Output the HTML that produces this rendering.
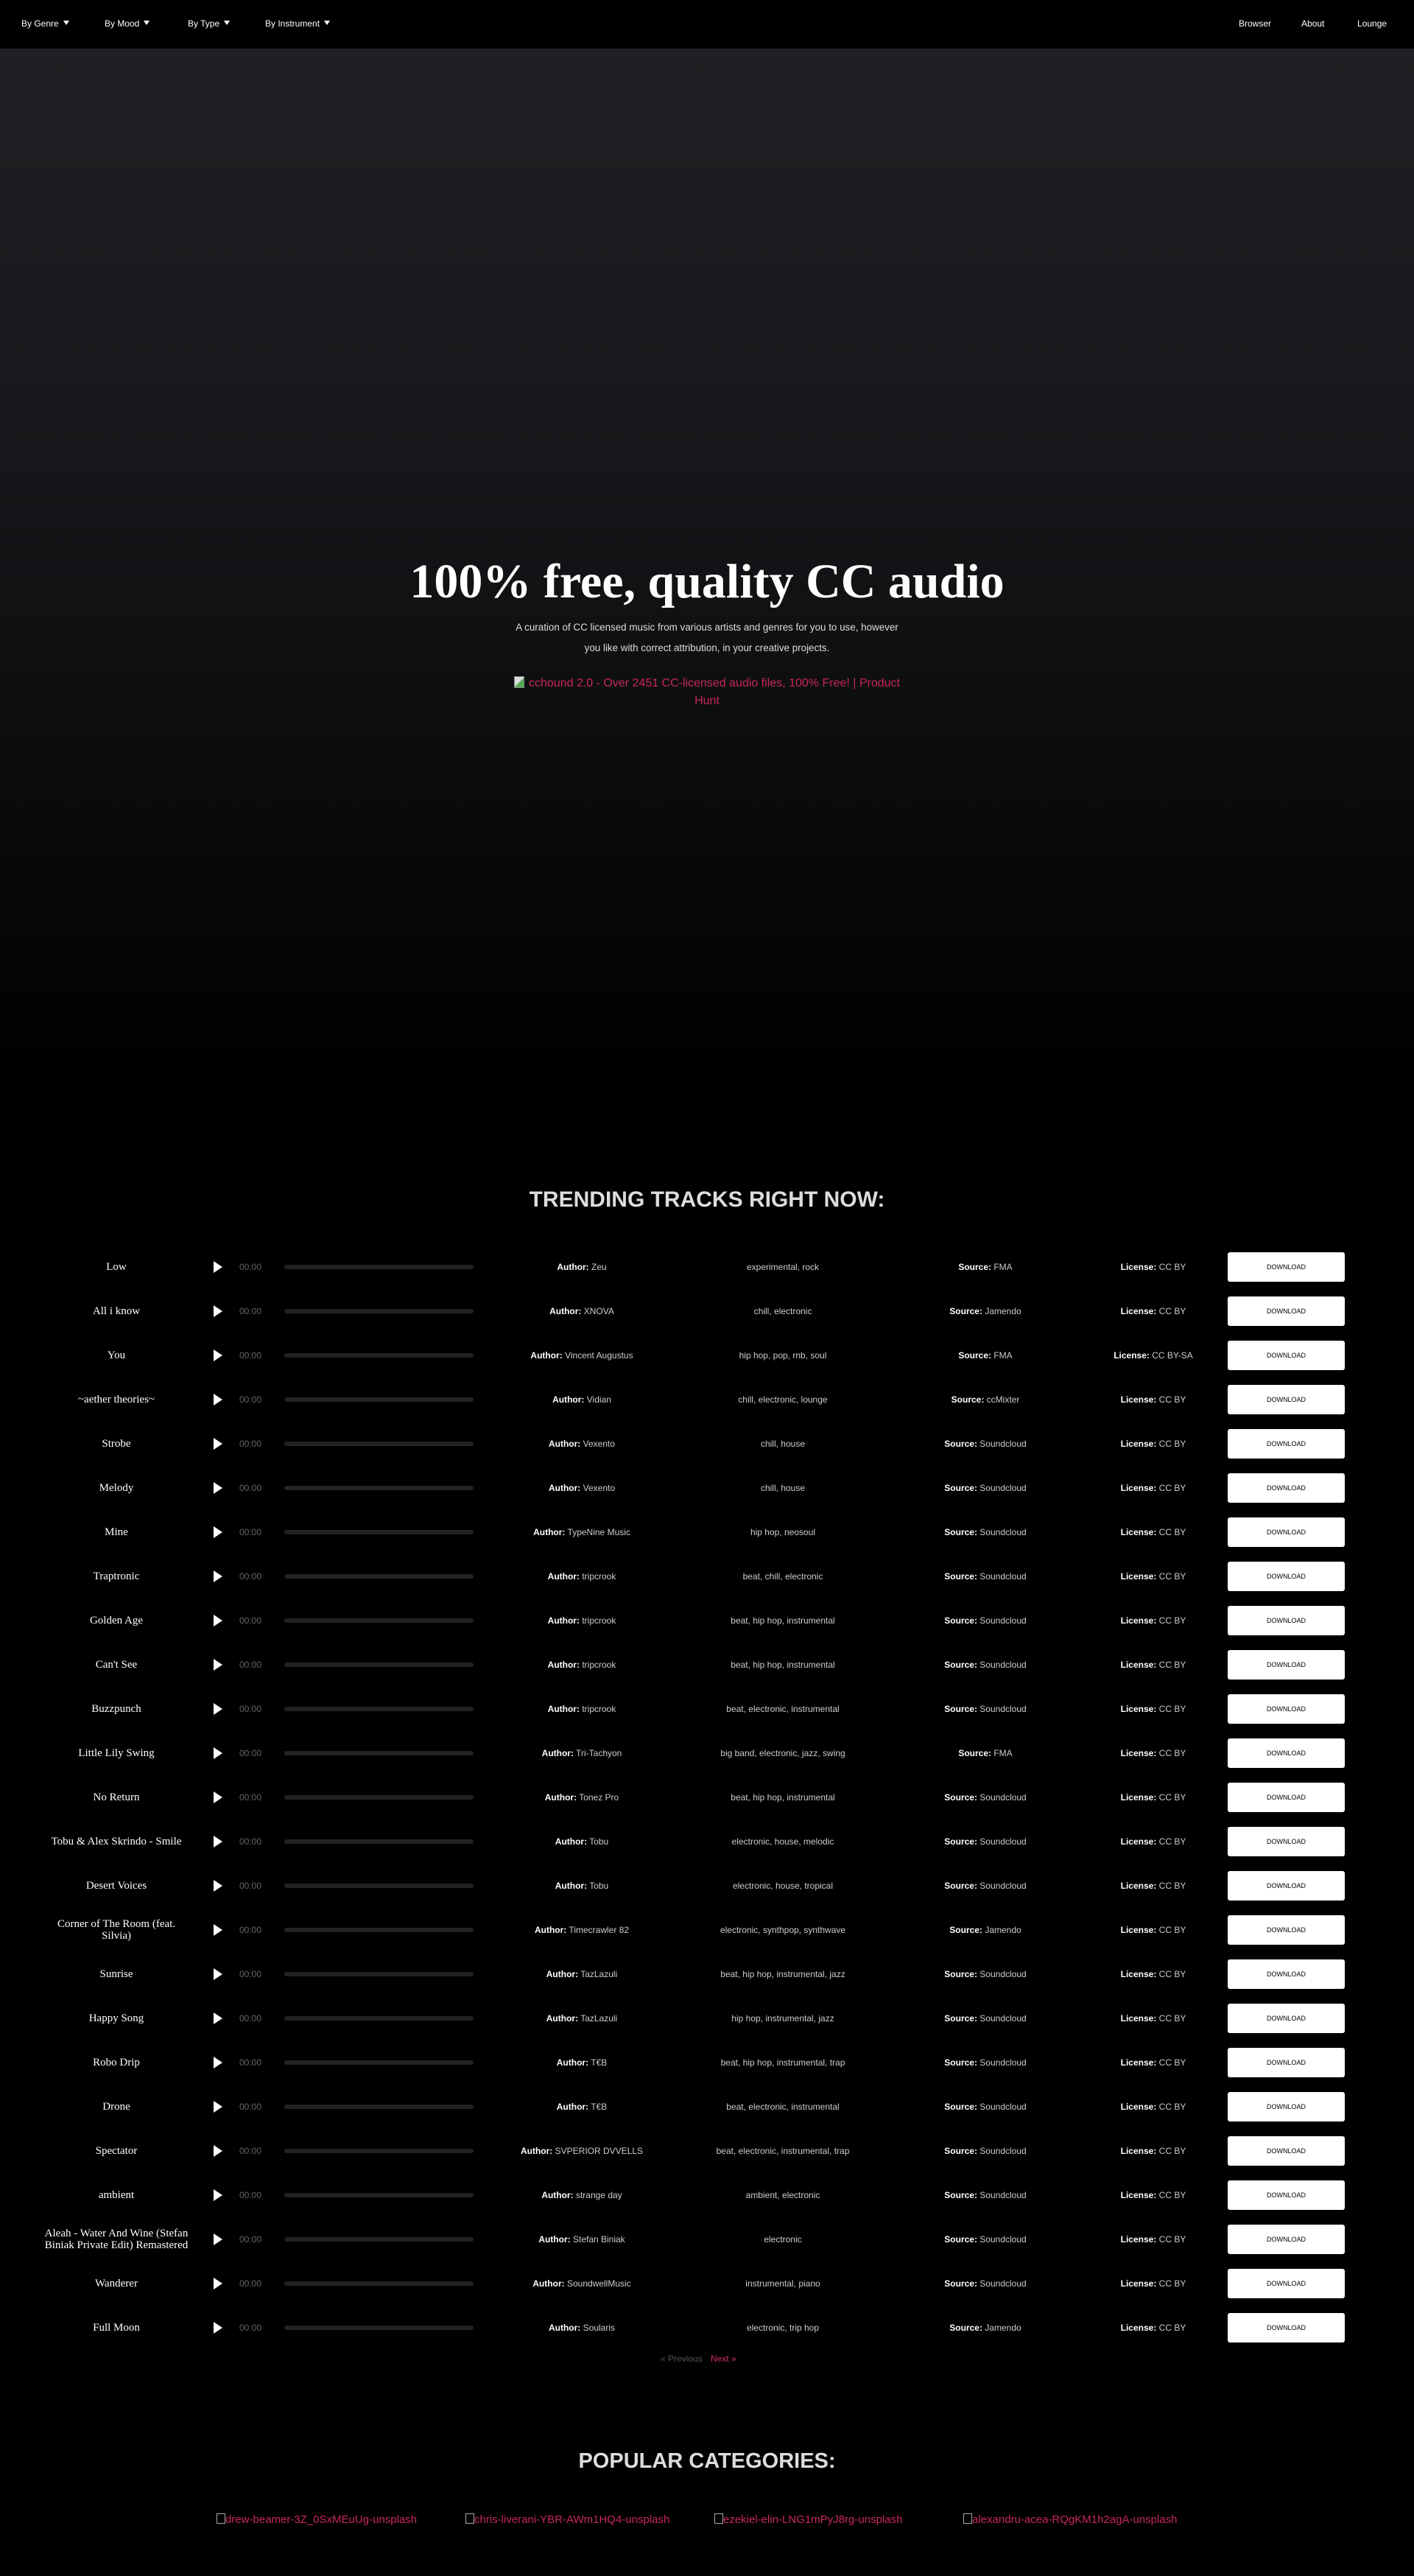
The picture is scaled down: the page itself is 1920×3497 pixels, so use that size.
<!DOCTYPE html>
<html><head><meta charset="utf-8"><style>
*{margin:0;padding:0;box-sizing:border-box}
body{width:1920px;height:3497px;background:#000;color:#fff;font-family:"Liberation Sans",sans-serif;position:relative;overflow:hidden}
.nav{position:absolute;top:0;left:0;width:1920px;height:66px;background:#000}
.nav span{position:absolute;top:25px;font-size:12px;color:#fff}
.nav span i{display:inline-block;width:0;height:0;border-left:4px solid transparent;border-right:4px solid transparent;border-top:6px solid #fff;margin-left:6px;vertical-align:2px}
.hero{position:absolute;top:66px;left:0;width:1920px;height:1400px;background:linear-gradient(#1f2023 0%,#16171a 40%,#0a0a0b 75%,#000 100%)}
h1{position:absolute;top:752px;left:0;width:1920px;text-align:center;font-family:"Liberation Serif",serif;font-weight:bold;font-size:66px;color:#fff}
.sub{position:absolute;top:838px;left:0;width:1920px;text-align:center;font-size:13.4px;line-height:28px;color:#ddd}
.ph{position:absolute;top:916px;left:690px;width:540px;text-align:center;font-size:16px;line-height:24px;color:#c8265f}
.ph i{display:inline-block;width:14px;height:16px;border:1px solid #888;background:linear-gradient(135deg,#ddd 50%,#5a5 50%);vertical-align:-2px;margin-right:6px}
h2{position:absolute;left:0;width:1920px;text-align:center;font-size:30px;font-weight:bold;color:#ddd}
.r{position:absolute;left:0;width:1920px;height:60px;font-size:12px}
.r>*{position:absolute;top:50%;transform:translateY(-50%)}
.t{left:58px;width:200px;text-align:center;font-family:"Liberation Serif",serif;font-size:15px;line-height:16px;color:#fff}
.p{left:290px;width:0;height:0;border-top:8px solid transparent;border-bottom:8px solid transparent;border-left:12px solid #fff}
.tm{left:325px;color:#666;font-size:12px}
.bar{left:386px;width:257px;height:6px;border-radius:3px;background:#222}
.a{left:670px;width:240px;text-align:center;color:#ccc}
.g{left:933px;width:260px;text-align:center;color:#ccc}
.s{left:1238px;width:200px;text-align:center;color:#ccc}
.l{left:1476px;width:180px;text-align:center;color:#ccc}
b{color:#fff}
.d{left:1667px;width:159px;height:40px;background:#fff;border-radius:3px;color:#000;font-size:9px;text-align:center;line-height:40px}
.pg{position:absolute;top:3195px;left:897px;font-size:12px;color:#555}
.pg span{color:#d1336b;margin-left:8px}
.cat{position:absolute;top:3412px;font-size:15px;color:#c8265f}
.cat i{display:inline-block;width:12px;height:14px;border:1px solid #aaa;vertical-align:top}
</style></head><body>
<div class="hero"></div>
<div class="nav">
<span style="left:29px">By Genre<i></i></span>
<span style="left:142px">By Mood<i></i></span>
<span style="left:255px">By Type<i></i></span>
<span style="left:360px">By Instrument<i></i></span>
<span style="left:1682px">Browser</span>
<span style="left:1767px">About</span>
<span style="left:1843px">Lounge</span>
</div>
<h1>100% free, quality CC audio</h1>
<div class="sub">A curation of CC licensed music from various artists and genres for you to use, however<br>you like with correct attribution, in your creative projects.</div>
<div class="ph"><i></i>cchound 2.0 - Over 2451 CC-licensed audio files, 100% Free! | Product Hunt</div>
<h2 style="top:1612px">TRENDING TRACKS RIGHT NOW:</h2>

<div class="r" style="top:1690px"><div class="t">Low</div><div class="p"></div><div class="tm">00:00</div><div class="bar"></div><div class="a"><b>Author:</b> Zeu</div><div class="g">experimental, rock</div><div class="s"><b>Source:</b> FMA</div><div class="l"><b>License:</b> CC BY</div><div class="d">DOWNLOAD</div></div>
<div class="r" style="top:1750px"><div class="t">All i know</div><div class="p"></div><div class="tm">00:00</div><div class="bar"></div><div class="a"><b>Author:</b> XNOVA</div><div class="g">chill, electronic</div><div class="s"><b>Source:</b> Jamendo</div><div class="l"><b>License:</b> CC BY</div><div class="d">DOWNLOAD</div></div>
<div class="r" style="top:1810px"><div class="t">You</div><div class="p"></div><div class="tm">00:00</div><div class="bar"></div><div class="a"><b>Author:</b> Vincent Augustus</div><div class="g">hip hop, pop, rnb, soul</div><div class="s"><b>Source:</b> FMA</div><div class="l"><b>License:</b> CC BY-SA</div><div class="d">DOWNLOAD</div></div>
<div class="r" style="top:1870px"><div class="t">~aether theories~</div><div class="p"></div><div class="tm">00:00</div><div class="bar"></div><div class="a"><b>Author:</b> Vidian</div><div class="g">chill, electronic, lounge</div><div class="s"><b>Source:</b> ccMixter</div><div class="l"><b>License:</b> CC BY</div><div class="d">DOWNLOAD</div></div>
<div class="r" style="top:1930px"><div class="t">Strobe</div><div class="p"></div><div class="tm">00:00</div><div class="bar"></div><div class="a"><b>Author:</b> Vexento</div><div class="g">chill, house</div><div class="s"><b>Source:</b> Soundcloud</div><div class="l"><b>License:</b> CC BY</div><div class="d">DOWNLOAD</div></div>
<div class="r" style="top:1990px"><div class="t">Melody</div><div class="p"></div><div class="tm">00:00</div><div class="bar"></div><div class="a"><b>Author:</b> Vexento</div><div class="g">chill, house</div><div class="s"><b>Source:</b> Soundcloud</div><div class="l"><b>License:</b> CC BY</div><div class="d">DOWNLOAD</div></div>
<div class="r" style="top:2050px"><div class="t">Mine</div><div class="p"></div><div class="tm">00:00</div><div class="bar"></div><div class="a"><b>Author:</b> TypeNine Music</div><div class="g">hip hop, neosoul</div><div class="s"><b>Source:</b> Soundcloud</div><div class="l"><b>License:</b> CC BY</div><div class="d">DOWNLOAD</div></div>
<div class="r" style="top:2110px"><div class="t">Traptronic</div><div class="p"></div><div class="tm">00:00</div><div class="bar"></div><div class="a"><b>Author:</b> tripcrook</div><div class="g">beat, chill, electronic</div><div class="s"><b>Source:</b> Soundcloud</div><div class="l"><b>License:</b> CC BY</div><div class="d">DOWNLOAD</div></div>
<div class="r" style="top:2170px"><div class="t">Golden Age</div><div class="p"></div><div class="tm">00:00</div><div class="bar"></div><div class="a"><b>Author:</b> tripcrook</div><div class="g">beat, hip hop, instrumental</div><div class="s"><b>Source:</b> Soundcloud</div><div class="l"><b>License:</b> CC BY</div><div class="d">DOWNLOAD</div></div>
<div class="r" style="top:2230px"><div class="t">Can't See</div><div class="p"></div><div class="tm">00:00</div><div class="bar"></div><div class="a"><b>Author:</b> tripcrook</div><div class="g">beat, hip hop, instrumental</div><div class="s"><b>Source:</b> Soundcloud</div><div class="l"><b>License:</b> CC BY</div><div class="d">DOWNLOAD</div></div>
<div class="r" style="top:2290px"><div class="t">Buzzpunch</div><div class="p"></div><div class="tm">00:00</div><div class="bar"></div><div class="a"><b>Author:</b> tripcrook</div><div class="g">beat, electronic, instrumental</div><div class="s"><b>Source:</b> Soundcloud</div><div class="l"><b>License:</b> CC BY</div><div class="d">DOWNLOAD</div></div>
<div class="r" style="top:2350px"><div class="t">Little Lily Swing</div><div class="p"></div><div class="tm">00:00</div><div class="bar"></div><div class="a"><b>Author:</b> Tri-Tachyon</div><div class="g">big band, electronic, jazz, swing</div><div class="s"><b>Source:</b> FMA</div><div class="l"><b>License:</b> CC BY</div><div class="d">DOWNLOAD</div></div>
<div class="r" style="top:2410px"><div class="t">No Return</div><div class="p"></div><div class="tm">00:00</div><div class="bar"></div><div class="a"><b>Author:</b> Tonez Pro</div><div class="g">beat, hip hop, instrumental</div><div class="s"><b>Source:</b> Soundcloud</div><div class="l"><b>License:</b> CC BY</div><div class="d">DOWNLOAD</div></div>
<div class="r" style="top:2470px"><div class="t">Tobu &amp; Alex Skrindo - Smile</div><div class="p"></div><div class="tm">00:00</div><div class="bar"></div><div class="a"><b>Author:</b> Tobu</div><div class="g">electronic, house, melodic</div><div class="s"><b>Source:</b> Soundcloud</div><div class="l"><b>License:</b> CC BY</div><div class="d">DOWNLOAD</div></div>
<div class="r" style="top:2530px"><div class="t">Desert Voices</div><div class="p"></div><div class="tm">00:00</div><div class="bar"></div><div class="a"><b>Author:</b> Tobu</div><div class="g">electronic, house, tropical</div><div class="s"><b>Source:</b> Soundcloud</div><div class="l"><b>License:</b> CC BY</div><div class="d">DOWNLOAD</div></div>
<div class="r" style="top:2590px"><div class="t">Corner of The Room (feat. Silvia)</div><div class="p"></div><div class="tm">00:00</div><div class="bar"></div><div class="a"><b>Author:</b> Timecrawler 82</div><div class="g">electronic, synthpop, synthwave</div><div class="s"><b>Source:</b> Jamendo</div><div class="l"><b>License:</b> CC BY</div><div class="d">DOWNLOAD</div></div>
<div class="r" style="top:2650px"><div class="t">Sunrise</div><div class="p"></div><div class="tm">00:00</div><div class="bar"></div><div class="a"><b>Author:</b> TazLazuli</div><div class="g">beat, hip hop, instrumental, jazz</div><div class="s"><b>Source:</b> Soundcloud</div><div class="l"><b>License:</b> CC BY</div><div class="d">DOWNLOAD</div></div>
<div class="r" style="top:2710px"><div class="t">Happy Song</div><div class="p"></div><div class="tm">00:00</div><div class="bar"></div><div class="a"><b>Author:</b> TazLazuli</div><div class="g">hip hop, instrumental, jazz</div><div class="s"><b>Source:</b> Soundcloud</div><div class="l"><b>License:</b> CC BY</div><div class="d">DOWNLOAD</div></div>
<div class="r" style="top:2770px"><div class="t">Robo Drip</div><div class="p"></div><div class="tm">00:00</div><div class="bar"></div><div class="a"><b>Author:</b> T€B</div><div class="g">beat, hip hop, instrumental, trap</div><div class="s"><b>Source:</b> Soundcloud</div><div class="l"><b>License:</b> CC BY</div><div class="d">DOWNLOAD</div></div>
<div class="r" style="top:2830px"><div class="t">Drone</div><div class="p"></div><div class="tm">00:00</div><div class="bar"></div><div class="a"><b>Author:</b> T€B</div><div class="g">beat, electronic, instrumental</div><div class="s"><b>Source:</b> Soundcloud</div><div class="l"><b>License:</b> CC BY</div><div class="d">DOWNLOAD</div></div>
<div class="r" style="top:2890px"><div class="t">Spectator</div><div class="p"></div><div class="tm">00:00</div><div class="bar"></div><div class="a"><b>Author:</b> SVPERIOR DVVELLS</div><div class="g">beat, electronic, instrumental, trap</div><div class="s"><b>Source:</b> Soundcloud</div><div class="l"><b>License:</b> CC BY</div><div class="d">DOWNLOAD</div></div>
<div class="r" style="top:2950px"><div class="t">ambient</div><div class="p"></div><div class="tm">00:00</div><div class="bar"></div><div class="a"><b>Author:</b> strange day</div><div class="g">ambient, electronic</div><div class="s"><b>Source:</b> Soundcloud</div><div class="l"><b>License:</b> CC BY</div><div class="d">DOWNLOAD</div></div>
<div class="r" style="top:3010px"><div class="t">Aleah - Water And Wine (Stefan Biniak Private Edit) Remastered</div><div class="p"></div><div class="tm">00:00</div><div class="bar"></div><div class="a"><b>Author:</b> Stefan Biniak</div><div class="g">electronic</div><div class="s"><b>Source:</b> Soundcloud</div><div class="l"><b>License:</b> CC BY</div><div class="d">DOWNLOAD</div></div>
<div class="r" style="top:3070px"><div class="t">Wanderer</div><div class="p"></div><div class="tm">00:00</div><div class="bar"></div><div class="a"><b>Author:</b> SoundwellMusic</div><div class="g">instrumental, piano</div><div class="s"><b>Source:</b> Soundcloud</div><div class="l"><b>License:</b> CC BY</div><div class="d">DOWNLOAD</div></div>
<div class="r" style="top:3130px"><div class="t">Full Moon</div><div class="p"></div><div class="tm">00:00</div><div class="bar"></div><div class="a"><b>Author:</b> Soularis</div><div class="g">electronic, trip hop</div><div class="s"><b>Source:</b> Jamendo</div><div class="l"><b>License:</b> CC BY</div><div class="d">DOWNLOAD</div></div>

<div class="pg">« Previous <span>Next »</span></div>
<h2 style="top:3325px;font-size:29px">POPULAR CATEGORIES:</h2>
<div class="cat" style="left:294px"><i></i>drew-beamer-3Z_0SxMEuUg-unsplash</div>
<div class="cat" style="left:632px"><i></i>chris-liverani-YBR-AWm1HQ4-unsplash</div>
<div class="cat" style="left:970px"><i></i>ezekiel-elin-LNG1mPyJ8rg-unsplash</div>
<div class="cat" style="left:1308px"><i></i>alexandru-acea-RQgKM1h2agA-unsplash</div>
</body></html>
